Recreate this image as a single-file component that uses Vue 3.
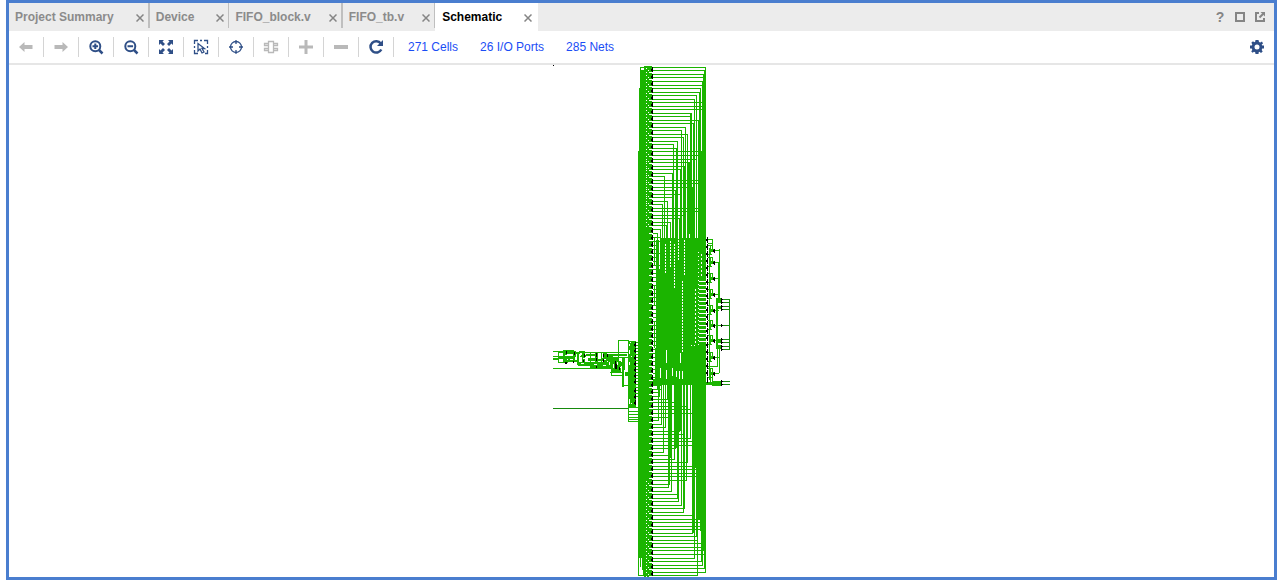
<script setup>
import { ref } from 'vue'

const tabs = ['Project Summary', 'Device', 'FIFO_block.v', 'FIFO_tb.v', 'Schematic']
const active = ref('Schematic')
const links = ['271 Cells', '26 I/O Ports', '285 Nets']

const tools = [
  { name: 'Previous', tone: 'off', fill: 'M1 8L6.500 3V6H14.500V10H6.500V13Z' },
  { name: 'Next', tone: 'off', fill: 'M15 8L9.500 3V6H1.500V10H9.500V13Z' },
  { name: 'Zoom in', line: 'M12.300 7.200A5 5 0 1 1 2.300 7.200A5 5 0 1 1 12.300 7.200M4.500 7.200H10.100M7.300 4.400V10', thick: 'M11 11L14.500 14.500' },
  { name: 'Zoom out', line: 'M12.300 7.200A5 5 0 1 1 2.300 7.200A5 5 0 1 1 12.300 7.200M4.500 7.200H10.100', thick: 'M11 11L14.500 14.500' },
  { name: 'Zoom fit', fill: 'M1 1H6L4.500 2.500L7 5L5 7L2.500 4.500L1 6ZM15 1V6L13.500 4.500L11 7L9 5L11.500 2.500L10 1ZM1 15V10L2.500 11.500L5 9L7 11L4.500 13.500L6 15ZM15 15H10L11.500 13.500L9 11L11 9L13.500 11.500L15 10Z' },
  { name: 'Select area', line: 'M1.500 5V1.500H5M7 1.500H9M11 1.500H14.500V5M14.500 7V9M14.500 11V14.500H12M1.500 7V9M1.500 11V14.500H5M5 4.500V12L7 10L9 14L11 13L9 9.500H11.500Z', thin: true },
  { name: 'Autofit selection', line: 'M13.500 8A5.500 5.500 0 1 1 2.500 8A5.500 5.500 0 1 1 13.500 8M8 1V5M8 11V15M1 8H5M11 8H15', thin: true },
  { name: 'Expand cell', tone: 'off', line: 'M5.500 2.500H10.500V13.500H5.500ZM5 4.500H1.500V6.500H5M5 9.500H1.500V11.500H5M11 4.500H14.500V6.500H11M11 9.500H14.500V11.500H11', thin: true },
  { name: 'Add', tone: 'off', fill: 'M6.500 1H9.500V6.500H15V9.500H9.500V15H6.500V9.500H1V6.500H6.500Z' },
  { name: 'Remove', tone: 'off', fill: 'M1 6H15V10H1Z' },
  { name: 'Regenerate', thick: 'M12.800 4.500A5.700 5.700 0 1 0 13.300 10.500', fill: 'M15 1V7H9Z' },
]

const seg = (x, y, w, h) => `M${x} ${y}h${w}v${h}h${-w}z`
const rects = (list) => list.map((r) => seg(...r)).join('')

// Nets leaving the register column above the mux block: [row, turning column]
const upper = [
  [67, 705], [70, 705], [74, 703], [77, 704], [81, 702], [85, 702], [88, 700], [92, 699], [95, 696],
  [99, 694], [102, 702], [106, 702], [109, 702], [113, 691], [116, 690], [120, 698], [123, 693],
  [127, 685], [130, 681], [134, 687], [137, 683], [141, 677], [144, 673], [148, 676], [151, 702],
  [155, 700], [159, 696], [162, 688], [166, 684], [169, 680], [173, 672], [176, 664], [180, 699],
  [183, 698], [187, 692], [190, 675], [194, 680], [197, 672], [201, 667], [204, 662], [208, 698],
  [211, 698], [215, 685], [218, 679], [222, 670], [225, 666], [229, 660], [233, 657],
]
// Nets leaving the column below the mux block
const lower = [
  [389, 657], [392, 658], [396, 659], [399, 667], [402, 676], [406, 686], [409, 690], [413, 705],
  [417, 668], [420, 658], [424, 661], [427, 665], [431, 679], [434, 683], [438, 690], [441, 695],
  [445, 692], [448, 675], [452, 663], [455, 670], [459, 674], [462, 687], [466, 693], [469, 697],
  [473, 698], [476, 698], [480, 686], [484, 669], [487, 668], [491, 671], [494, 677], [498, 677],
  [501, 678], [505, 681], [508, 684], [512, 683], [515, 693], [519, 699], [522, 700], [526, 700],
  [529, 700], [533, 692], [536, 696], [540, 697], [543, 701], [547, 702], [550, 703], [554, 704],
  [558, 694], [561, 701], [565, 702], [568, 704], [572, 705], [575, 697],
]
const nets =
  rects(upper.flatMap(([y, x]) => [[652, y, x - 651, 1], [x, y, 1, 240 - y]])) +
  rects(lower.flatMap(([y, x]) => [[652, y, x - 651, 1], [x, 384, 1, y - 383]]))

const trunks = rects([
  [644, 66, 8, 511], [640, 67, 5, 1], [640, 67, 1, 500], [641, 70, 3, 478], [639, 88, 3, 470],
  [638, 151, 6, 390], [638, 540, 1, 36], [638, 575, 8, 1], [642, 102, 2, 468], [643, 556, 2, 20],
  [704, 70, 2, 478], [702, 81, 4, 470], [700, 151, 6, 380], [698, 151, 4, 368],
  [672, 174, 2, 70], [676, 148, 2, 92], [690, 113, 2, 120], [688, 162, 2, 72], [693, 123, 2, 100],
  [656, 270, 50, 78], [660, 238, 46, 146], [655, 348, 51, 37], [652, 379, 54, 6],
  [692, 384, 14, 57], [695, 440, 11, 28], [698, 464, 8, 55], [668, 384, 4, 74], [674, 384, 3, 64],
  [686, 384, 2, 78], [679, 384, 2, 47], [677, 431, 2, 64], [658, 384, 2, 12], [692, 441, 2, 92],
  [683, 434, 1, 78],
])

// Register cells down the main column, seven pixels apart
const cells = Array.from({ length: 73 }, (_, i) => 66 + i * 7)
const outputs = rects(cells.map((y) => [652, y + 1, 1, 5]).concat(cells.map((y) => [651, y + 3, 1, 2])))
const gaps = rects(
  cells.flatMap((y, i) => {
    const row = [[649, y + 6, 4, 1]]
    if (i < 23 || i > 58) row.push([646, y + 2, 1, 1], [646, y + 6, 1, 1], [648, y + 4, 1, 1])
    if (y > 150 && y < 205) row.push([646, y + 4, 1, 1])
    return row
  }),
)
const feeders = rects(
  Array.from({ length: 39 }, (_, i) => [652, 237 + i * 4, 9, 1])
    .concat([[654, 238, 1, 28], [656, 240, 3, 145], [654, 322, 1, 26], [654, 286, 1, 20]]),
)
const specks = rects([
  ...Array.from({ length: 14 }, (_, i) => [695, 289 + i * 4, 1, 2]),
  ...Array.from({ length: 24 }, (_, i) => [698, 252 + i * 4, 1, 1]),
  ...Array.from({ length: 16 }, (_, i) => [699, 281 + i * 4, 7, 1]),
  ...Array.from({ length: 6 }, (_, i) => [701, 254 + i * 4, 1, 2]),
  ...Array.from({ length: 24 }, (_, i) => [682, 281 + i * 3, 1, 2]),
  ...Array.from({ length: 9 }, (_, i) => [659, 242 + i * 3, 1, 2]),
  ...Array.from({ length: 10 }, (_, i) => [665, 244 + i * 3, 1, 2]),
  ...Array.from({ length: 9 }, (_, i) => [670, 241 + i * 3, 1, 2]),
  ...Array.from({ length: 15 }, (_, i) => [674, 244 + i * 3, 1, 2]),
  ...Array.from({ length: 8 }, (_, i) => [678, 237 + i * 3, 1, 2]),
  ...Array.from({ length: 12 }, (_, i) => [684, 240 + i * 3, 1, 2]),
  [666, 350, 1, 13], [680, 353, 1, 10], [660, 368, 1, 10], [666, 370, 1, 9], [672, 368, 1, 8],
  [676, 371, 1, 6], [679, 371, 1, 8], [682, 371, 1, 8], [691, 345, 1, 1], [694, 345, 1, 1],
])

// Second and third rank of cells to the right of the block
const rank = [250, 262, 278, 294, 310, 325, 340, 357, 373]
const rightNets = rects([
  ...rank.flatMap((y) => [[710, y - 4, 1, 9], [711, y - 1, 4, 3], [708, y - 5, 4, 1], [708, y + 4, 4, 1], [715, y, 4, 1], [712, y - 5, 1, 4]]),
  [708, 239, 4, 1], [712, 239, 1, 10], [708, 243, 5, 1], [709, 248, 1, 132], [710, 376, 1, 6], [712, 373, 1, 9],
  [719, 249, 1, 51], [718, 262, 1, 38], [716, 298, 2, 50], [716, 298, 5, 5], [716, 306, 5, 3], [717, 325, 4, 1],
  [716, 339, 5, 4], [716, 345, 5, 4], [719, 348, 1, 25], [717, 346, 1, 20], [708, 366, 10, 1],
  [705, 382, 15, 3], [712, 381, 9, 5],
])
const rightDark = rects([
  [729, 299, 1, 50], [722, 299, 8, 1], [722, 302, 8, 1], [722, 306, 8, 1], [722, 309, 8, 1], [722, 325, 8, 1],
  [722, 339, 8, 1], [722, 342, 8, 1], [722, 346, 8, 1], [722, 349, 8, 1], [722, 381, 8, 1], [722, 384, 8, 1],
])
const rightCells = rects([
  ...Array.from({ length: 21 }, (_, i) => [707, 237 + i * 7, 1, 6]),
  ...Array.from({ length: 20 }, (_, i) => [706, 239 + i * 7, 1, 2]),
  ...rank.map((y) => [714, y - 1, 1, 4]), ...rank.map((y) => [713, y, 1, 2]),
  ...[298, 301, 305, 308, 324, 338, 341, 345, 348, 380, 383].flatMap((y) => [[721, y, 1, 3], [722, y + 1, 1, 1]]),
])

// Input logic
const inputNets = rects([
  [553, 351, 12, 1], [553, 356, 8, 1], [553, 358, 6, 2], [558, 352, 1, 10], [558, 352, 6, 1], [558, 362, 10, 1],
  [563, 350, 11, 4], [559, 356, 17, 3], [563, 350, 4, 12], [568, 357, 2, 5], [573, 351, 3, 11],
  [567, 360, 12, 2], [576, 352, 4, 2], [577, 352, 2, 13], [579, 351, 6, 2], [580, 355, 6, 2], [582, 353, 3, 11],
  [585, 352, 25, 1], [586, 354, 10, 2], [590, 352, 1, 16], [588, 358, 30, 3], [595, 352, 3, 13],
  [601, 352, 1, 12], [603, 353, 4, 10], [607, 355, 6, 3], [578, 362, 22, 4], [590, 365, 12, 4],
  [592, 362, 30, 4], [599, 366, 15, 3], [608, 357, 5, 12], [611, 361, 10, 11], [553, 368, 37, 1],
  [610, 372, 14, 1], [611, 372, 1, 3], [611, 375, 11, 1], [618, 340, 1, 26], [618, 340, 11, 1],
  [598, 352, 30, 1], [605, 354, 22, 2], [613, 357, 15, 1], [622, 358, 2, 29], [624, 357, 1, 13],
  [622, 385, 7, 1], [625, 372, 3, 4], [628, 341, 8, 66], [628, 407, 10, 1], [628, 408, 1, 13],
  [628, 411, 10, 1], [628, 414, 10, 1], [628, 417, 10, 1], [628, 419, 10, 1], [628, 421, 10, 1],
  ...Array.from({ length: 19 }, (_, i) => [635, 342 + i * 3, 4, 1]),
])
const inputHoles = rects([
  [560, 353, 2, 1], [560, 360, 2, 1], [565, 355, 3, 1], [571, 355, 2, 1], [575, 357, 1, 3], [579, 355, 2, 1],
  [583, 358, 2, 1], [587, 357, 3, 1], [592, 357, 3, 1], [598, 358, 3, 1], [604, 359, 2, 1], [581, 363, 3, 1],
  [594, 364, 3, 1], [603, 365, 3, 1], [609, 362, 1, 3], [613, 364, 1, 4], [617, 362, 1, 3], [619, 367, 3, 1],
  [629, 344, 1, 2], [630, 342, 1, 1], [629, 350, 1, 4], [631, 356, 1, 1], [629, 362, 1, 3], [629, 399, 1, 5], [631, 403, 1, 1],
])
const inputCells = rects([
  [566, 351, 1, 3], [565, 362, 2, 2], [574, 352, 1, 3], [573, 361, 1, 2], [584, 354, 1, 3], [583, 360, 1, 2],
  [596, 353, 1, 4], [596, 358, 1, 3], [603, 354, 1, 3], [603, 359, 1, 3], [607, 354, 1, 3], [596, 366, 1, 2],
  [615, 361, 1, 3], [615, 364, 2, 5], [619, 367, 1, 3],
  ...[342, 348, 355, 361, 367, 373, 379, 388, 394, 400].flatMap((y) => [[635, y, 1, 5], [634, y + 2, 1, 2]]),
])
</script>

<template>
  <main class="window">
    <header class="tabbar">
      <div v-for="t in tabs" :key="t" class="tab" :class="{ active: t === active, file: t.endsWith('.v') }">
        <button class="title" type="button" @click="active = t">{{ t }}</button>
        <button class="close" type="button" :aria-label="'Close ' + t">
          <svg viewBox="0 0 8 8"><path d="M.5 .5L7.500 7.500M7.500 .5L.5 7.500" /></svg>
        </button>
      </div>
      <div class="window-tools">
        <button type="button" class="help" aria-label="Help">?</button>
        <button type="button" aria-label="Maximize">
          <svg viewBox="0 0 12 12"><path d="M2 2H10V10H2Z" /></svg>
        </button>
        <button type="button" aria-label="Float">
          <svg viewBox="0 0 12 12"><path d="M5 2H2V10H10V7" /><path d="M5.500 6.500L9 3" /><path class="solid" d="M6.500 1H11V5.500Z" /></svg>
        </button>
      </div>
    </header>

    <nav class="toolbar" aria-label="Schematic tools">
      <button v-for="t in tools" :key="t.name" type="button" class="tool" :class="t.tone" :aria-label="t.name">
        <svg viewBox="0 0 16 16">
          <path v-if="t.fill" class="solid" :d="t.fill" />
          <path v-if="t.line" class="line" :class="{ thin: t.thin }" :d="t.line" />
          <path v-if="t.thick" class="thick" :d="t.thick" />
        </svg>
      </button>
      <div class="links">
        <a v-for="l in links" :key="l" href="#">{{ l }}</a>
      </div>
      <button type="button" class="settings" aria-label="Settings">
        <svg viewBox="0 0 16 16">
          <path fill-rule="evenodd" d="M6.500 1H9.500L10 3L11.300 3.500L13 2.500L14 4.500L12.700 5.500L13.200 6.500H15V9.500H13.200L12.700 11L13.700 12.500L12 14L10.500 12.800L9.700 13.200L9.500 15H6.500L6.200 13.200L5 12.700L3.500 13.700L2.200 12.200L3.300 11L2.800 9.500H1V6.500H2.800L3.300 5.200L2.300 3.700L4 2.200L5.200 3.300L6.200 2.800ZM8 5.500A2.500 2.500 0 1 0 8 10.500A2.500 2.500 0 1 0 8 5.500Z" />
        </svg>
      </button>
    </nav>

    <section class="canvas" aria-label="Schematic">
      <svg class="schematic" viewBox="553 65 177 512" role="img" aria-label="Netlist drawing">
        <path class="net" :d="nets" />
        <path class="net" :d="trunks" />
        <path class="net" :d="feeders" />
        <path class="hole" :d="gaps" />
        <path class="hole" :d="specks" />
        <path class="cell" :d="outputs" />
        <path class="net" :d="rightNets" />
        <path class="dark" :d="rightDark" />
        <path class="cell" :d="rightCells" />
        <path class="net" :d="inputNets" />
        <path class="hole" :d="inputHoles" />
        <path class="cell" :d="inputCells" />
        <path class="dark" d="M553 408h75v1h-75z" />
        <path class="cell" d="M553 65h1v1h-1z" />
      </svg>
    </section>
  </main>
</template>

<style>
body {
  margin: 0;
  background: #fff;
}
</style>

<style scoped>
.window {
  box-sizing: border-box;
  min-height: 100vh;
  margin: 0 1px 0 6px;
  border: 3px solid #4a7ecf;
  background: #fff;
  display: flex;
  flex-direction: column;
  font: 12px/16px Arial, "Liberation Sans", sans-serif;
}
button {
  border: 0;
  padding: 0;
  background: none;
  font: inherit;
  color: inherit;
}
svg {
  display: block;
  fill: none;
}
.tabbar {
  display: flex;
  height: 28px;
  background: #ececec;
  color: #8b8b8b;
}
.tab {
  display: flex;
  align-items: center;
  gap: 22px;
  padding: 0 4px 0 6px;
  border-right: 2px solid;
  border-image: linear-gradient(#bfbfbf 0 24px, #ececec 24px) 1;
}
.tab:nth-child(even) {
  border-right-width: 1px;
}
.tab.file {
  gap: 18px;
}
.tab.active {
  background: #fff;
  color: #000;
  border: 0;
  padding: 0 6px 0 7px;
}
.title {
  font-weight: bold;
}
.close svg {
  width: 8px;
  height: 8px;
  margin-top: 2px;
  stroke: #858585;
  stroke-width: 1.5;
}
.window-tools {
  margin-left: auto;
  display: flex;
  align-items: center;
  gap: 8px;
  padding-right: 8px;
}
.window-tools button {
  width: 12px;
}
.window-tools svg {
  width: 12px;
  height: 12px;
  stroke: #858585;
  stroke-width: 2;
}
.window-tools .solid {
  fill: #858585;
  stroke: none;
}
.help {
  font-size: 14px;
  font-weight: bold;
  color: #858585;
}
.toolbar {
  display: flex;
  align-items: center;
  height: 32px;
  border-bottom: 2px solid #e6e6e6;
}
.tool {
  width: 35px;
  height: 20px;
  border-right: 1px solid #d4d4d4;
  display: grid;
  place-items: center;
  color: #33507f;
}
.tool.off {
  color: #b9b9b9;
}
.tool svg,
.settings svg {
  width: 16px;
  height: 16px;
}
.tool .solid {
  fill: currentColor;
}
.line {
  stroke: currentColor;
  stroke-width: 2;
}
.line.thin {
  stroke-width: 1.3;
}
.thick {
  stroke: currentColor;
  stroke-width: 2.5;
}
.links {
  display: flex;
  gap: 22px;
  padding-left: 14px;
}
.links a {
  color: #1a4df5;
  text-decoration: none;
}
.settings {
  margin: 0 9px 0 auto;
}
.settings svg {
  fill: #2f4f87;
}
.tool:not(.off) {
  color: #2f4f87;
}
.canvas {
  flex: 1;
  display: flex;
  justify-content: center;
}
.schematic {
  width: 177px;
  height: 512px;
  shape-rendering: crispEdges;
}
.net {
  fill: #1bb400;
}
.dark {
  fill: #168a0c;
}
.cell {
  fill: #000;
}
.hole {
  fill: #fff;
}
</style>
